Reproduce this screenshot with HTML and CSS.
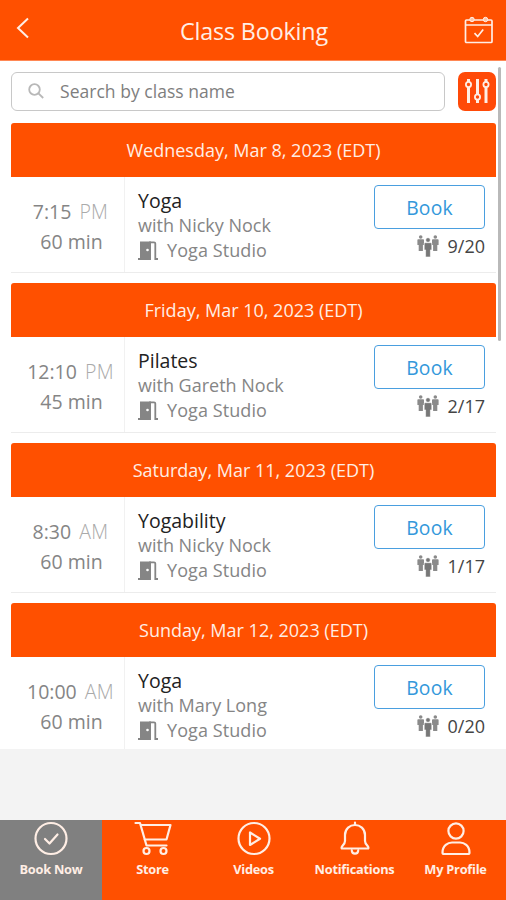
FILE: index.html
```html
<!DOCTYPE html>
<html lang="en">
<head>
<meta charset="utf-8">
<title>Class Booking</title>
<link rel="stylesheet" href="styles.css">
</head>
<body>
<svg class="defs" aria-hidden="true">
  <symbol id="door" viewBox="0 0 20 19"><path d="M2 .5h11V19H2z" fill="#858585"/><path d="M0 18h3M11 1.300h5q1.300 0 1.300 1.300V18H20" fill="none" stroke="#858585" stroke-width="1.800"/><circle cx="9.500" cy="9" r="1.300" fill="#fff"/></symbol>
  <symbol id="people" viewBox="0 0 22 22"><g fill="#8a8a8a"><circle cx="3.700" cy="2" r="1.800"/><path d="M1.200 4.300h5q.8 0 .8.800v5H5.900V16H1.700v-5.900H.4v-5q0-.8.800-.8z"/><circle cx="18.300" cy="2" r="1.800"/><path d="M15.800 4.300h5q.8 0 .8.800v5h-1.300V16h-4.200v-5.900H15v-5q0-.8.800-.8z"/></g><g fill="#777" stroke="#fff" stroke-width=".6"><circle cx="11" cy="5" r="2.300"/><path d="M8.200 7.700h5.600q1 0 1 1v6.200h-1.400V22H8.600v-7.100H7.200V8.700q0-1 1-1z"/></g></symbol>
</svg>
<div class="app">
  <header class="topbar">
    <svg class="back" viewBox="0 0 14 22"><path d="M12 1.500L2 11l10 9.500"/></svg>
    <h1>Class Booking</h1>
    <svg class="calendar" viewBox="0 0 30 28"><rect x="1.500" y="4" width="26.500" height="22.500" rx="1"/><path d="M1.500 9h26.500M10.500 17.200l3.200 3.300 5.500-7"/><g class="ring"><circle cx="8" cy="3.500" r="2.200"/><circle cx="21.500" cy="3.500" r="2.200"/></g></svg>
  </header>
  <main class="content">
    <div class="search-row">
      <div class="search">
        <svg viewBox="0 0 16 16"><circle cx="6.500" cy="6.500" r="5.300"/><path d="M10.200 10.200l5 4.800"/></svg>
        <span>Search by class name</span>
      </div>
      <div class="filter">
        <svg viewBox="0 0 26 26"><path d="M4.500 8v17M13.500 1v16M13.500 22v3M22 8v17M4.500 1v3M22 1v3"/><g class="knob"><circle cx="4.500" cy="6.500" r="2.600"/><circle cx="13.500" cy="19" r="2.600"/><circle cx="22" cy="6.500" r="2.600"/></g></svg>
      </div>
    </div>
    <section class="day">
      <h2>Wednesday, Mar 8, 2023 (EDT)</h2>
      <div class="class-row">
        <div class="time"><p class="hour">7:15 <span>PM</span></p><p>60 min</p></div>
        <div class="info"><h3>Yoga</h3><p>with Nicky Nock</p><p class="room"><svg><use href="#door"/></svg>Yoga Studio</p></div>
        <div class="action"><div class="book">Book</div><p class="count"><svg><use href="#people"/></svg>9/20</p></div>
      </div>
    </section>
    <section class="day">
      <h2>Friday, Mar 10, 2023 (EDT)</h2>
      <div class="class-row">
        <div class="time"><p class="hour">12:10 <span>PM</span></p><p>45 min</p></div>
        <div class="info"><h3>Pilates</h3><p>with Gareth Nock</p><p class="room"><svg><use href="#door"/></svg>Yoga Studio</p></div>
        <div class="action"><div class="book">Book</div><p class="count"><svg><use href="#people"/></svg>2/17</p></div>
      </div>
    </section>
    <section class="day">
      <h2>Saturday, Mar 11, 2023 (EDT)</h2>
      <div class="class-row">
        <div class="time"><p class="hour">8:30 <span>AM</span></p><p>60 min</p></div>
        <div class="info"><h3>Yogability</h3><p>with Nicky Nock</p><p class="room"><svg><use href="#door"/></svg>Yoga Studio</p></div>
        <div class="action"><div class="book">Book</div><p class="count"><svg><use href="#people"/></svg>1/17</p></div>
      </div>
    </section>
    <section class="day">
      <h2>Sunday, Mar 12, 2023 (EDT)</h2>
      <div class="class-row">
        <div class="time"><p class="hour">10:00 <span>AM</span></p><p>60 min</p></div>
        <div class="info"><h3>Yoga</h3><p>with Mary Long</p><p class="room"><svg><use href="#door"/></svg>Yoga Studio</p></div>
        <div class="action"><div class="book">Book</div><p class="count"><svg><use href="#people"/></svg>0/20</p></div>
      </div>
    </section>
    <div class="scrollbar"></div>
  </main>
  <nav class="tabs">
    <div class="tab active"><svg viewBox="0 0 38 36"><circle cx="19" cy="17.500" r="15.500"/><path d="M13 18l4.500 4.500 8-9"/></svg><span>Book Now</span></div>
    <div class="tab"><svg viewBox="0 0 38 36"><path d="M1.500 2H6l6.500 22.500h20M7 4h29.500l-4 14.500H10.500"/><circle cx="12.500" cy="30" r="3"/><circle cx="29.500" cy="30" r="3"/></svg><span>Store</span></div>
    <div class="tab"><svg viewBox="0 0 38 36"><circle cx="19" cy="17.500" r="15.500"/><path d="M15 11.500v12.500L25 17.700z"/></svg><span>Videos</span></div>
    <div class="tab"><svg viewBox="0 0 38 36"><path d="M19 1.500V4M5.800 27.500c-1.500-2 3.200-3.500 3.200-7.500v-6C9 7.500 14 4 19 4s10 3.500 10 10v6c0 4 4.700 5.500 3.200 7.500zM15.800 29.500c.2 4.200 6.200 4.200 6.400 0"/></svg><span>Notifications</span></div>
    <div class="tab"><svg viewBox="0 0 38 36"><circle cx="19" cy="10" r="7.600"/><path d="M5.500 31.500C5.500 24.500 11 21.500 15 21.500h8c4 0 9.500 3 9.500 10q0 1.500-1.500 1.500H7q-1.500 0-1.500-1.500z"/></svg><span>My Profile</span></div>
  </nav>
</div>
</body>
</html>
```
FILE: styles.css
```css
* { box-sizing: border-box; }
body, h1, h2, h3, p { margin: 0; font-weight: 400; }
body { font-family: "Open Sans", sans-serif; background: #f3f3f3; }
.defs { position: absolute; width: 0; height: 0; }
.app { width: 506px; height: 900px; display: flex; flex-direction: column; overflow: hidden; background: #f3f3f3; }
svg { fill: none; stroke: #ffeee5; flex: none; }

.topbar { height: 61px; background: #ff5000; border-bottom: 1px solid #ff8855; display: flex; align-items: center; justify-content: space-between; padding: 0 12px 0 16px; color: #ffeee5; }
.topbar h1 { font-size: 23.3px; line-height: 30px; letter-spacing: -.15px; margin: 2px 0 0 14px; }
.back { width: 14px; height: 22px; stroke-width: 2; margin-bottom: 4px; }
.calendar { width: 30px; height: 28px; stroke-width: 1.7; }
.ring { fill: #ffc5a8; stroke-width: 1; }

.content { position: relative; height: 688px; background: #fff; padding: 11px 10px 0 11px; overflow: hidden; }
.search-row { display: flex; justify-content: space-between; height: 39px; margin-bottom: 12px; }
.search { width: 434px; border: 1.5px solid #c8c8c8; border-radius: 6px; display: flex; align-items: center; gap: 16px; padding: 0 0 2px 16px; color: #7e7e7e; font-size: 17.5px; letter-spacing: .03px; }
.search svg { width: 16px; height: 16px; stroke: #b8b8b8; stroke-width: 1.8; }
.filter { width: 38px; height: 39px; background: #ff4a08; border-radius: 7px; display: grid; place-items: center; }
.filter svg { width: 26px; height: 26px; stroke-width: 3; margin-bottom: 2px; }
.filter .knob { fill: #ff4a08; stroke-width: 1.8; }

.day { height: 160px; }
.day h2 { height: 54px; background: #ff5000; color: #ffeee5; border-radius: 3px 3px 0 0; font-size: 18px; line-height: 54px; text-align: center; }
.class-row { height: 96px; display: flex; border-bottom: 1px solid #ececec; }
.time { width: 114px; border-right: 1px solid #f1f1f1; text-align: center; padding: 20px 0 0 8px; font-size: 19.5px; line-height: 29.5px; color: #858585; }
.time .hour { margin-left: -2px; white-space: nowrap; }
.hour span { color: #aaa; font-weight: 300; margin-left: 3px; letter-spacing: .3px; }
.info { flex: 1; padding: 11px 0 0 13px; font-size: 18px; line-height: 24.5px; color: #858585; white-space: nowrap; }
.info h3 { font-size: 19.5px; line-height: 25px; color: #222; }
.room { display: flex; align-items: center; gap: 9px; letter-spacing: .08px; }
.room svg { width: 20px; height: 19px; stroke: none; margin-top: 2px; }
.action { width: 111px; margin-right: 11px; padding-top: 8px; }
.book { height: 44px; border: 1.5px solid #4a9fdf; border-radius: 4px; color: #3498db; font-size: 19.3px; line-height: 44px; text-align: center; letter-spacing: .2px; }
.count { display: flex; align-items: center; justify-content: flex-end; gap: 9px; height: 34px; font-size: 18px; color: #444; }
.count svg { width: 22px; height: 22px; stroke: none; }
.scrollbar { position: absolute; top: 6px; right: 5px; width: 3px; height: 274px; border-radius: 2px; background: #b9b9b9; }

.tabs { height: 80px; margin-top: auto; display: grid; grid-template-columns: 102px repeat(4, 1fr); background: #ff5000; }
.tab { display: flex; flex-direction: column; align-items: center; color: #ffeee5; font-size: 12.8px; font-weight: 700; line-height: 20px; letter-spacing: -.25px; padding-top: 1px; white-space: nowrap; }
.tab svg { width: 38px; height: 36px; stroke-width: 2.2; stroke-linecap: round; stroke-linejoin: round; margin-bottom: 2px; }
.active { background: #808080; }
```
